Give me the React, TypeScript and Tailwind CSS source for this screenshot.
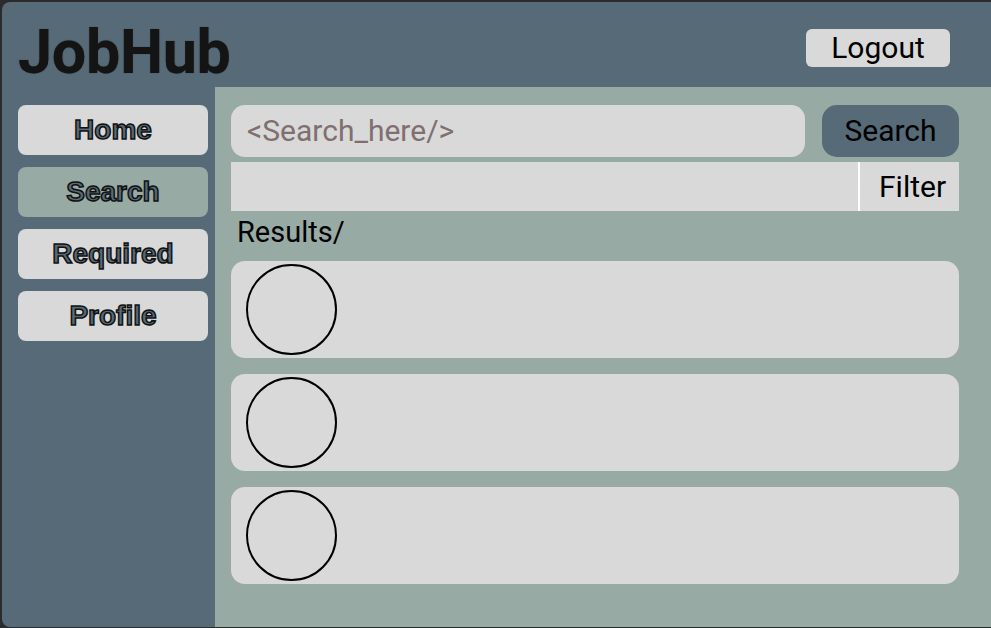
import React from "react";

const navItems = [
  { label: "Home", active: false },
  { label: "Search", active: true },
  { label: "Required", active: false },
  { label: "Profile", active: false },
];

export default function App() {
  return (
    <div className="w-[991px] h-[628px] bg-[#2b2b2b] pl-[2px] pt-[2px] pb-[1px] overflow-hidden flex flex-col">
      <header className="h-[85px] shrink-0 bg-[#566a77] rounded-tl-[8px] flex justify-between items-start">
        <div
          className="ml-[16px] mt-[20px] text-[61px] leading-none font-bold text-[#141414] tracking-[-0.3px]"
          style={{ fontFamily: "Roboto, 'Liberation Sans', sans-serif", textShadow: "0 0 1px #333" }}
        >
          JobHub
        </div>
        <button
          className="mt-[27px] mr-[41px] w-[144px] h-[38px] bg-[#d9d9d9] rounded-[6px] flex items-center justify-center text-[30px] leading-none text-black"
          style={{ fontFamily: "Roboto, 'Liberation Sans', sans-serif" }}
        >
          Logout
        </button>
      </header>
      <div className="flex flex-1 min-h-0">
        <aside className="w-[213px] shrink-0 bg-[#566a77] rounded-bl-[8px] pl-[16px] pt-[18px] flex flex-col gap-[12px]">
          {navItems.map((item) => (
            <div
              key={item.label}
              className={`w-[190px] h-[50px] rounded-[8px] flex items-center justify-center text-[28px] leading-none font-bold text-[#566a77] [-webkit-text-stroke:1.5px_#111] ${
                item.active ? "bg-[#97aaa3]" : "bg-[#d9d9d9]"
              }`}
              style={{ fontFamily: "'Liberation Sans', Arial, sans-serif" }}
            >
              {item.label}
            </div>
          ))}
        </aside>
        <main
          className="flex-1 bg-[#97aaa3] pl-[16px] pr-[32px] pt-[18px] flex flex-col"
          style={{ fontFamily: "Roboto, 'Liberation Sans', sans-serif" }}
        >
          <div className="flex gap-[17px] h-[52px]">
            <div className="flex-1 bg-[#d9d9d9] rounded-[14px] flex items-center pl-[16px] text-[30px] leading-none text-[#806f6f]">
              &lt;Search_here/&gt;
            </div>
            <button className="w-[137px] bg-[#566a77] rounded-[15px] flex items-center justify-center text-[30px] leading-none text-black">
              Search
            </button>
          </div>
          <div className="mt-[5px] h-[49px] bg-[#d9d9d9] flex">
            <div className="flex-1" />
            <div className="w-[101px] border-l-2 border-white flex items-center pl-[19px] text-[30px] leading-none text-black">
              Filter
            </div>
          </div>
          <div className="mt-[7px] ml-[6px] text-[29px] leading-none text-black">Results/</div>
          <div className="mt-[14px] flex flex-col gap-[16px]">
            {[0, 1, 2].map((i) => (
              <div key={i} className="h-[97px] bg-[#d9d9d9] rounded-[14px] flex items-center pl-[15px]">
                <div className="w-[91px] h-[91px] rounded-full border-2 border-black" />
              </div>
            ))}
          </div>
        </main>
      </div>
    </div>
  );
}
